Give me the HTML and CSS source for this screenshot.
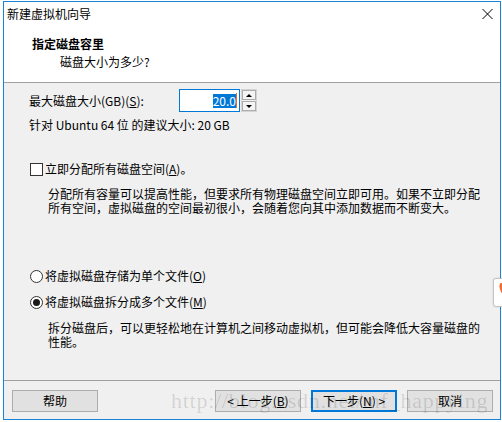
FILE: index.html
```html
<!DOCTYPE html>
<html lang="zh-CN">
<head>
    <meta charset="UTF-8">
    <meta name="viewport" content="width=device-width, initial-scale=1.0">
    <title>新建虚拟机向导</title>
    <link rel="stylesheet" href="styles.css">
</head>
<body>
    <div class="window">
        <div class="titlebar">
            <span>新建虚拟机向导</span>
            <svg class="close" width="11" height="10" viewBox="0 0 11 10">
                <path d="M0.5 0 L10.5 10 M10.5 0 L0.5 10" stroke="#000" stroke-width="1" fill="none"/>
            </svg>
        </div>

        <div class="header">
            <div class="header-title">指定磁盘容里</div>
            <div class="header-sub">磁盘大小为多少?</div>
        </div>

        <div class="content">
            <div class="size-row">
                <span class="size-label">最大磁盘大小(GB)(<u>S</u>):</span>
                <div class="spinbox">
                    <div class="spin-input"><span class="sel">20.0</span><span class="caret"></span></div>
                    <div class="spin-btns">
                        <div class="spin-btn"><span class="arrow-up"></span></div>
                        <div class="spin-btn"><span class="arrow-down"></span></div>
                    </div>
                </div>
            </div>
            <div class="hint">针对 Ubuntu 64 位 的建议大小: 20 GB</div>

            <div class="option check-row">
                <span class="checkbox"></span>
                <span>立即分配所有磁盘空间(<u>A</u>)。</span>
            </div>
            <p class="desc">分配所有容量可以提高性能，但要求所有物理磁盘空间立即可用。如果不立即分配<br>所有空间，虚拟磁盘的空间最初很小，会随着您向其中添加数据而不断变大。</p>

            <div class="option radio-row1">
                <span class="radio"></span>
                <span>将虚拟磁盘存储为单个文件(<u>O</u>)</span>
            </div>
            <div class="option radio-row2">
                <span class="radio on"></span>
                <span>将虚拟磁盘拆分成多个文件(<u>M</u>)</span>
            </div>
            <p class="desc desc2">拆分磁盘后，可以更轻松地在计算机之间移动虚拟机，但可能会降低大容量磁盘的<br>性能。</p>
        </div>

        <div class="footer">
            <button class="btn">帮助</button>
            <div class="nav">
                <button class="btn">&lt; 上一步(<u>B</u>)</button>
                <button class="btn default">下一步(<u>N</u>) &gt;</button>
                <button class="btn">取消</button>
            </div>
        </div>
    </div>

    <div class="watermark">http://blog.csdn.net/mf_happying</div>

    <div class="side-tab">
        <svg width="8" height="16" viewBox="0 0 8 16">
            <path d="M2 0 H8 V16 C5 13 1 9 0.5 4 C0.3 2 1 0 2 0 Z" fill="#f26a2e"/>
        </svg>
    </div>
</body>
</html>
```

FILE: styles.css
```css
html, body {
    margin: 0;
    overflow: hidden;
}
body {
    background: #fff;
    font-family: "Noto Sans CJK SC", "Noto Sans", sans-serif;
    font-size: 12px;
    color: #000;
}
.window {
    box-sizing: border-box;
    width: 498px;
    height: 419px;
    margin: 1px 0 0 3px;
    border: 1px solid #1883d7;
    display: flex;
    flex-direction: column;
    background: #fff;
}
.titlebar {
    box-sizing: border-box;
    height: 28px;
    padding: 4px 7px 0 3px;
    display: flex;
    justify-content: space-between;
    align-items: flex-start;
    line-height: 16px;
}
.close {
    margin-top: 3px;
}
.header {
    padding: 5px 0 11px 28px;
    border-bottom: 1px solid #a0a0a0;
    line-height: 18px;
}
.header-title {
    font-weight: bold;
}
.header-sub {
    padding-left: 28px;
}
.content {
    flex: 1;
    background: #f0f0f0;
    padding: 6px 0 0 25px;
    border-bottom: 1px solid #a0a0a0;
}
.size-row {
    display: flex;
    align-items: center;
    height: 23px;
}
.size-label {
    width: 150px;
    line-height: 16px;
}
.spinbox {
    display: flex;
    gap: 1px;
}
.spin-input {
    box-sizing: border-box;
    width: 61px;
    height: 23px;
    border: 1px solid #0078d7;
    background: #fff;
    display: flex;
    justify-content: flex-end;
    align-items: center;
    padding-right: 2px;
}
.sel {
    background: #0078d7;
    color: #fff;
    line-height: 14px;
}
.caret {
    width: 1px;
    height: 15px;
    background: #e8702a;
}
.spin-btns {
    box-sizing: border-box;
    width: 16px;
    height: 23px;
    border: 1px solid #d4d4d4;
    display: flex;
    flex-direction: column;
    gap: 1px;
}
.spin-btn {
    flex: 1;
    border: 1px solid #adadad;
    background: #f4f4f4;
    display: flex;
    justify-content: center;
    align-items: center;
}
.arrow-up {
    border-left: 3px solid transparent;
    border-right: 3px solid transparent;
    border-bottom: 3px solid #000;
}
.arrow-down {
    border-left: 3px solid transparent;
    border-right: 3px solid transparent;
    border-top: 3px solid #000;
}
.hint {
    margin-top: 5px;
    line-height: 16px;
}
.option {
    display: flex;
    align-items: center;
    gap: 2px;
    margin-left: 1px;
    line-height: 16px;
}
.check-row {
    margin-top: 28px;
}
.checkbox {
    box-sizing: border-box;
    width: 13px;
    height: 13px;
    border: 1px solid #333;
    background: #fff;
}
.radio {
    box-sizing: border-box;
    width: 13px;
    height: 13px;
    border: 1px solid #333;
    border-radius: 50%;
    background: #fff;
    display: flex;
    justify-content: center;
    align-items: center;
}
.radio.on::after {
    content: "";
    width: 7px;
    height: 7px;
    border-radius: 50%;
    background: #1a1a1a;
}
.desc {
    margin: 10px 0 0 19px;
    line-height: 14px;
    white-space: nowrap;
}
.radio-row1 {
    margin-top: 53px;
}
.radio-row2 {
    margin-top: 10px;
}
.desc2 {
    margin-top: 11px;
}
.footer {
    box-sizing: border-box;
    height: 38px;
    padding: 9px 7px 0 8px;
    background: #f0f0f0;
    display: flex;
    justify-content: space-between;
    align-items: flex-start;
}
.nav {
    display: flex;
    gap: 10px;
}
.btn {
    box-sizing: border-box;
    width: 86px;
    height: 22px;
    padding: 0;
    border: 1px solid #adadad;
    background: #e1e1e1;
    font: inherit;
    color: #000;
    line-height: 18px;
}
.btn.default {
    border: 2px solid #0078d7;
}
.watermark {
    position: absolute;
    left: 171px;
    top: 390px;
    font-family: "Liberation Serif", serif;
    font-size: 22px;
    line-height: 22px;
    letter-spacing: 0.75px;
    color: rgba(0, 0, 0, 0.13);
    white-space: nowrap;
    pointer-events: none;
}
.side-tab {
    position: absolute;
    left: 493px;
    top: 278px;
    box-sizing: border-box;
    width: 14px;
    height: 29px;
    padding: 4px 0 0 5px;
    background: #fff;
    border: 1px solid #c4c4c4;
    border-radius: 3px 0 0 3px;
    box-shadow: 0 0 2px rgba(0, 0, 0, 0.15);
}
```
